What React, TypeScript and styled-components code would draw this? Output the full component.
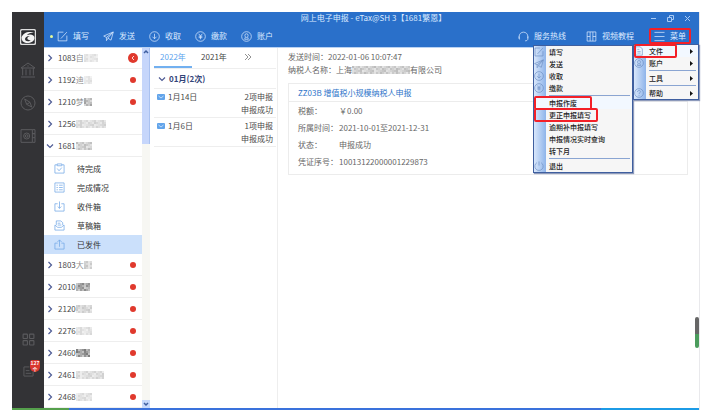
import React from "react";
import styled, { createGlobalStyle, css } from "styled-components";

const GlobalStyle = createGlobalStyle`
  *, *::before, *::after { box-sizing: border-box; }
  body {
    margin: 0;
    background: #ffffff;
    color: #4a4a4a;
    font-family: "Noto Sans CJK SC", "Noto Sans", sans-serif;
    font-size: 8px;
    line-height: 12px;
  }
  button {
    margin: 0;
    padding: 0;
    border: 0;
    background: none;
    color: inherit;
    font: inherit;
    text-align: left;
    white-space: nowrap;
    cursor: pointer;
  }
  h1, h2, p, dl, dd, ul { margin: 0; padding: 0; font: inherit; }
  ul { list-style: none; }
  svg { display: block; flex: none; }
`;

/* ---------- icons ---------- */

type IconName =
  | "edit" | "send" | "receive" | "pay" | "user" | "phone" | "film" | "menu"
  | "bank" | "compass" | "safe" | "apps" | "news"
  | "todo" | "list" | "inbox" | "draft" | "sent"
  | "file" | "help" | "power";

const shapes: Record<IconName, React.ReactNode> = {
  edit: <path d="M14 2.500H2.500v19h19V10M8.500 16.500L21.500 2.500" />,
  send: <path d="M1.500 11L22.500 2l-5 18-7-4.500L22 2.500M1.500 11l6 3L22 2.500M7.500 14v7l3.500-5" />,
  receive: (
    <>
      <circle cx="12" cy="12" r="10.500" />
      <path d="M12 6v11M7.500 12.500L12 17l4.500-4.500" />
    </>
  ),
  pay: (
    <>
      <circle cx="12" cy="12" r="10.500" />
      <path d="M8 6l4 5 4-5M12 11v7M8 11.500h8M8 14.500h8" />
    </>
  ),
  user: (
    <>
      <circle cx="12" cy="12" r="10.500" />
      <path d="M8.500 9.500a3.500 3.500 0 017 0c0 2.500-1.500 4.500-3.500 4.500s-3.500-2-3.500-4.500zM9.500 13.500L8 18h8l-1.500-4.500" />
    </>
  ),
  phone: <path d="M2.500 16V12a9.500 9.500 0 0119 0v4M2.500 11.500v6h2M21.500 11.500v6c0 2.500-2.500 4-6 4" />,
  film: <path d="M2.500 2h19v20h-19zM9 2v20M15 2v20M2.500 12H9M15 12h6.500" />,
  menu: <path d="M1 3h22M1 12h22M1 21h22" />,
  bank: <path d="M1.500 9L12 1.500 22.500 9zM4 9v11M9 11v9M15 11v9M20 9v11M1.500 22.500h21M12 5v2" />,
  compass: (
    <>
      <circle cx="12" cy="12" r="10.500" />
      <path d="M7 6l8 5 2.500 7-7.500-4zM10 14l5-3" />
    </>
  ),
  safe: (
    <>
      <path d="M1.500 2.500h17v19h-17zM18.500 2.500h4v6h-4M18.500 8.500h4v6h-4M22.500 14.500v7h-4" />
      <circle cx="10" cy="12" r="4.500" />
      <circle cx="10" cy="12" r="2" />
    </>
  ),
  apps: (
    <>
      <rect x="2" y="2" width="8" height="8" rx="1" />
      <rect x="14" y="2" width="8" height="8" rx="1" />
      <rect x="2" y="14" width="8" height="8" rx="1" />
      <rect x="14" y="14" width="8" height="8" rx="1" />
    </>
  ),
  news: <path d="M14 2H2v20h20V12M6 10h8M6 16h12" />,
  todo: <path d="M7 4H2v18h20V4h-5M7 2h10v4H7zM7 12l4 5 6-7" />,
  list: <path d="M2 2h20v20H2zM5.500 7h3M11 7h8M5.500 12h3M11 12h8M5.500 17h3M11 17h8" />,
  inbox: <path d="M8 6H2v16h20V6h-6M12 1v15M8 12l4 4 4-4" />,
  draft: <path d="M5 11V2h10l4 4v5M2 11v11h20V11l-6 5H8zM8 7h6M8 11h8" />,
  sent: <path d="M8 9H2v13h20V9h-6M12 17V2M7.500 6.500L12 2l4.500 4.500" />,
  file: <path d="M4 2h11l5 5v15H4zM8 8h5M8 13h8M8 17h8" />,
  help: (
    <>
      <circle cx="12" cy="12" r="10.500" />
      <path d="M8.500 9.500c0-5 7-4.500 7-.5 0 2.500-3.500 2.500-3.500 5.500M12 17v2" />
    </>
  ),
  power: <path d="M12 1v10M7 4a10 10 0 1010 0" />,
};

function Icon({ name, size = 11, weight = 1.6 }: { name: IconName; size?: number; weight?: number }) {
  return (
    <svg width={size} height={size} viewBox="0 0 24 24" fill="none" stroke="currentColor" strokeWidth={weight} aria-hidden="true">
      {shapes[name]}
    </svg>
  );
}

function Chevron({ open = false }: { open?: boolean }) {
  return (
    <svg width="8" height="8" viewBox="0 0 8 8" fill="none" stroke="#4d5a94" strokeWidth="1.200" aria-hidden="true">
      <path d={open ? "M1 2.500L4 5.500 7 2.500" : "M2.500 1L5.500 4 2.500 7"} />
    </svg>
  );
}

function Logo() {
  return (
    <svg width="16" height="16" viewBox="0 0 32 32" aria-hidden="true">
      <rect width="32" height="32" rx="3" fill="#dedede" />
      <rect x="2.500" y="2.500" width="27" height="27" rx="2" fill="#2b2c30" />
      <path d="M3 17C6 8 15 4 28 7c-7 0-12 2-14 5 8-3 15 0 15 6 0 7-9 11-17 10C6 27 3 23 3 17z" fill="#f4f4f4" />
      <path d="M10 20c0-4 5-7 10-6-4 1-6 3-5 6 1 2 4 3 7 2-4 4-12 3-12-2z" fill="#2b2c30" />
    </svg>
  );
}

/* Pixelated patch that hides part of a name. */
function Mosaic({ cells, seed, tone = 0.35 }: { cells: number; seed: number; tone?: number }) {
  const blocks = [];
  for (let column = 0; column < cells; column += 1) {
    for (let row = 0; row < 4; row += 1) {
      const value = ((column * 37 + row * 61 + seed * 17 + column * row * 13) % 29) / 29;
      blocks.push(
        <rect key={`${column}-${row}`} x={column * 2} y={row * 2} width="2" height="2" fill="#555555" opacity={value * tone * 0.5 + tone * 0.3} />,
      );
    }
  }
  return <svg width={cells * 2} height="8" aria-hidden="true">{blocks}</svg>;
}

/* ---------- frame ---------- */

const Page = styled.div`
  display: flex;
  min-height: 100vh;
  padding: 12px 19px 8px 12px;
`;

const Window = styled.div`
  display: grid;
  flex: 1;
  grid-template: 1fr 2px / 32px minmax(0, 1fr);
  border-right: 1px solid #e9e9ec;
`;

const Rail = styled.nav`
  display: flex;
  flex-direction: column;
  justify-content: space-between;
  padding: 17px 0 29px;
  background: #333336;
  color: #5b5b5e;
`;

const RailGroup = styled.div<{ $gap: number }>`
  display: flex;
  flex-direction: column;
  align-items: center;
  gap: ${(p) => p.$gap}px;
`;

const RailButton = styled.button`
  position: relative;
  display: grid;
  place-items: center;
  width: 16px;
  height: 16px;
`;

const RailBadge = styled.span`
  position: absolute;
  top: -3px;
  left: 10px;
  width: 10px;
  height: 12px;
  border-radius: 2px 2px 5px 5px;
  background: #d9372f;
  color: #ffffff;
  font-size: 5px;
  font-weight: 700;
  line-height: 6px;
  text-align: center;
`;

const Main = styled.div`
  display: flex;
  flex-direction: column;
  min-width: 0;
`;

const Header = styled.header`
  position: relative;
  z-index: 2;
  height: 35px;
  background: #2a70ca;
  color: #dceaff;
`;

const TitleRow = styled.div`
  display: grid;
  grid-template-columns: 1fr auto 1fr;
  align-items: center;
  height: 12px;
  padding: 0 8px 0 12px;
`;

const Title = styled.h1`
  white-space: nowrap;
`;

const WindowControls = styled.div`
  display: flex;
  justify-content: flex-end;
  gap: 10px;
`;

const Toolbar = styled.div`
  display: flex;
  align-items: center;
  height: 24px;
  padding: 0 13px 0 6px;
`;

const ToolGroup = styled.div<{ $gap: number }>`
  display: flex;
  align-items: center;
  gap: ${(p) => p.$gap}px;
  & + & { margin-left: auto; }
`;

const ToolButton = styled.button<{ $marked?: boolean }>`
  position: relative;
  display: flex;
  align-items: center;
  gap: 5px;
  ${(p) => p.$marked && css`
    &::after {
      content: "";
      position: absolute;
      inset: -2px -5px;
      border: 2px solid #f32028;
      border-radius: 2px;
    }
  `}
`;

const ActiveDot = styled.span`
  width: 3px;
  height: 3px;
  margin-right: 4px;
  border-radius: 50%;
  background: #e5f99a;
`;

/* ---------- menus ---------- */

const MenuPanel = styled.div<{ $wide?: boolean }>`
  position: absolute;
  z-index: ${(p) => (p.$wide ? 3 : 4)};
  top: ${(p) => (p.$wide ? 33 : 32)}px;
  right: ${(p) => (p.$wide ? 66 : 0)}px;
  width: ${(p) => (p.$wide ? 100 : 66)}px;
  border: 1px solid #3f5f9f;
  background: linear-gradient(90deg, #d9e7fb 0, #8eb4ea 12px, #f6f6f6 12px);
  box-shadow: 1px 1px 1px #8d9abb;
  color: #222222;
  font-size: 7px;
`;

const MenuItem = styled.button<{ $hot?: boolean }>`
  position: relative;
  display: grid;
  grid-template-columns: 12px 1fr auto;
  align-items: center;
  width: 100%;
  height: 12px;
  padding-right: 5px;
  background: ${(p) => (p.$hot ? "#f2f8ff" : "transparent")};
  font-weight: 500;
  & > svg { color: #6e8fc2; }
`;

const MenuText = styled.span`
  padding-left: 3px;
`;

const Marker = styled.span<{ $right: number }>`
  position: absolute;
  inset: -1px ${(p) => p.$right}px -1px 0;
  z-index: 1;
  border: 2px solid #f32028;
  border-radius: 2px;
`;

const MenuRule = styled.hr`
  height: 1px;
  margin: 1px 2px 1px 15px;
  border: 0;
  background: #8aa5d2;
`;

function SubmenuArrow() {
  return (
    <svg width="3" height="5" viewBox="0 0 3 5" aria-hidden="true">
      <path d="M0 0l3 2.500L0 5z" fill="#111111" />
    </svg>
  );
}

interface MenuEntry {
  label: string;
  icon?: IconName;
  mark?: number;
  hot?: boolean;
  rule?: boolean;
}

const mainMenu: MenuEntry[] = [
  { label: "文件", icon: "file", mark: 21, hot: true },
  { label: "账户", icon: "user" },
  { label: "工具", rule: true },
  { label: "帮助", icon: "help", rule: true },
];

const fileMenu: MenuEntry[] = [
  { label: "填写", icon: "edit" },
  { label: "发送", icon: "send" },
  { label: "收取", icon: "receive" },
  { label: "缴款", icon: "pay" },
  { label: "申报作废", rule: true, mark: 40, hot: true },
  { label: "更正申报填写", mark: 34 },
  { label: "逾期补申报填写" },
  { label: "申报情况实时查询" },
  { label: "转下月" },
  { label: "退出", icon: "power", rule: true },
];

function Menu({ entries, wide = false }: { entries: MenuEntry[]; wide?: boolean }) {
  return (
    <MenuPanel $wide={wide} role="menu">
      {entries.map((entry) => (
        <React.Fragment key={entry.label}>
          {entry.rule && <MenuRule />}
          <MenuItem role="menuitem" $hot={entry.hot}>
            {entry.icon ? <Icon name={entry.icon} size={10} /> : <span />}
            <MenuText>{entry.label}</MenuText>
            {!wide && <SubmenuArrow />}
            {entry.mark !== undefined && <Marker $right={entry.mark} />}
          </MenuItem>
        </React.Fragment>
      ))}
    </MenuPanel>
  );
}

/* ---------- body ---------- */

const Body = styled.div`
  display: grid;
  flex: 1;
  grid-template-columns: 98px 8px 128px minmax(0, 1fr);
  border-top: 1px solid #b9d2f3;
`;

const Tree = styled.ul`
  margin-top: -1px;
`;

const TreeRow = styled.button`
  display: grid;
  grid-template-columns: 8px auto 1fr;
  align-items: center;
  width: 100%;
  height: 22px;
  padding: 0 4px 0 2px;
  border-bottom: 1px solid #eeeeee;
`;

const TreeLabel = styled.span`
  display: flex;
  align-items: center;
  padding-left: 4px;
`;

const Partial = styled.span`
  opacity: 0.6;
`;

const Alert = styled.span<{ $large?: boolean }>`
  display: grid;
  place-items: center;
  justify-self: end;
  width: ${(p) => (p.$large ? 10 : 6)}px;
  height: ${(p) => (p.$large ? 10 : 6)}px;
  margin-right: ${(p) => (p.$large ? 0 : 2)}px;
  border-radius: 50%;
  background: #e0392d;
`;

const Folders = styled.ul`
  padding-top: 2px;
`;

const Folder = styled.button<{ $selected?: boolean }>`
  display: flex;
  align-items: center;
  gap: 12px;
  width: 100%;
  height: 19px;
  padding-left: 10px;
  background: ${(p) => (p.$selected ? "#cbe0fb" : "transparent")};
  color: #333333;
  & > svg { color: #6fa6e6; }
`;

const ScrollTrack = styled.div`
  display: flex;
  flex-direction: column;
  justify-content: space-between;
  background: #f7f7f3;
`;

const ScrollThumb = styled.div`
  height: 96px;
  border-right: 1px solid #a9c1f0;
  background: #c6d6fb;
`;

const ScrollEnd = styled.div`
  display: grid;
  place-items: center;
  height: 8px;
  background: #c6d9fb;
`;

const Periods = styled.section`
  padding: 0 1px 0 4px;
  border-right: 1px solid #eeeeee;
`;

const Tabs = styled.div`
  display: grid;
  grid-template-columns: 38px 44px 24px;
  height: 21px;
  border-bottom: 1px solid #eeeeee;
`;

const Tab = styled.button<{ $active?: boolean }>`
  display: grid;
  place-items: center;
  border-bottom: 2px solid ${(p) => (p.$active ? "#72b0f0" : "transparent")};
  color: ${(p) => (p.$active ? "#5ba3ee" : "#444444")};
`;

const Month = styled.button`
  display: flex;
  align-items: center;
  gap: 3px;
  width: 100%;
  height: 20px;
  padding-left: 4px;
  border-bottom: 1px solid #eeeeee;
  color: #324478;
  font-weight: 700;
`;

const Day = styled.button`
  display: grid;
  grid-template-columns: 8px 1fr auto;
  gap: 3px;
  width: 100%;
  height: 29px;
  padding: 1px 3px 0;
  border-bottom: 1px solid #eeeeee;
  line-height: 13px;
  & > svg { margin-top: 4px; }
`;

const DayResult = styled.span`
  text-align: right;
`;

const Detail = styled.main`
  display: flex;
  position: relative;
  flex-direction: column;
  padding: 2px 11px 0 10px;
  color: #666666;
`;

const Fact = styled.p`
  display: flex;
  align-items: center;
  height: 13px;
`;

const Card = styled.article`
  margin-top: 7px;
  border: 1px solid #ececec;
`;

const CardTitle = styled.h2`
  padding: 2px 9px 1px;
  border-bottom: 1px solid #ececec;
  line-height: 14px;
`;

const CardLink = styled.a`
  color: #2d74c9;
  text-decoration: none;
`;

const Fields = styled.dl`
  display: grid;
  grid-template-columns: 41px 1fr;
  padding: 0 9px 4px;
  line-height: 17px;
  white-space: nowrap;
`;

const Handle = styled.div`
  position: absolute;
  right: 0;
  bottom: 60px;
  width: 4px;
  height: 31px;
  border-radius: 2px;
  background: linear-gradient(#666666 55%, #4b9c5c 55%);
`;

const Taskbar = styled.footer`
  display: grid;
  grid-column: 1 / -1;
  grid-template-columns: 7fr 65fr 12fr;
  & > :nth-child(1) { background: #55a04c; }
  & > :nth-child(2) { background: #3a72dc; }
  & > :nth-child(3) { background: #1c9be6; }
`;

/* ---------- data ---------- */

interface Company {
  code: string;
  hint?: string;
  cells: number;
  tone?: number;
  alert?: "dot" | "arrow";
  open?: boolean;
}

const companies: Company[] = [
  { code: "1083", hint: "自", cells: 7, tone: 0.25, alert: "arrow" },
  { code: "1192", hint: "迪", cells: 4, tone: 0.25, alert: "dot" },
  { code: "1210", hint: "梦", cells: 4, tone: 0.7, alert: "dot" },
  { code: "1256", cells: 15, tone: 0.35 },
  { code: "1681", cells: 8, tone: 0.5, open: true },
  { code: "1803", hint: "大", cells: 4, tone: 0.45, alert: "dot" },
  { code: "2010", cells: 7, tone: 0.9, alert: "dot" },
  { code: "2120", cells: 8, tone: 0.4, alert: "dot" },
  { code: "2276", cells: 8, tone: 0.3, alert: "dot" },
  { code: "2460", cells: 7, tone: 1, alert: "dot" },
  { code: "2461", cells: 14, tone: 0.35, alert: "dot" },
  { code: "2468", cells: 8, tone: 0.3, alert: "dot" },
];

const folders: { label: string; icon: IconName; selected?: boolean }[] = [
  { label: "待完成", icon: "todo" },
  { label: "完成情况", icon: "list" },
  { label: "收件箱", icon: "inbox" },
  { label: "草稿箱", icon: "draft" },
  { label: "已发件", icon: "sent", selected: true },
];

const tools: { label: string; icon: IconName }[] = [
  { label: "填写", icon: "edit" },
  { label: "发送", icon: "send" },
  { label: "收取", icon: "receive" },
  { label: "缴款", icon: "pay" },
  { label: "账户", icon: "user" },
];

const days = [
  { date: "1月14日", count: "2项申报" },
  { date: "1月6日", count: "1项申报" },
];

const fields = [
  ["税额：", "￥0.00"],
  ["所属时间：", "2021-10-01至2021-12-31"],
  ["状态：", "申报成功"],
  ["凭证序号：", "10013122000001229873"],
];

function ControlIcon({ d }: { d: string }) {
  return (
    <svg width="7" height="7" viewBox="0 0 7 7" fill="none" stroke="#a9caf5" aria-hidden="true">
      <path d={d} />
    </svg>
  );
}

export default function App() {
  return (
    <>
      <GlobalStyle />
      <Page>
        <Window>
          <Rail>
            <RailGroup $gap={17}>
              <RailButton aria-label="eTax"><Logo /></RailButton>
              <RailButton aria-label="税务"><Icon name="bank" size={16} weight={1.5} /></RailButton>
              <RailButton aria-label="导航"><Icon name="compass" size={16} weight={1.5} /></RailButton>
              <RailButton aria-label="档案"><Icon name="safe" size={16} weight={1.5} /></RailButton>
            </RailGroup>
            <RailGroup $gap={16}>
              <RailButton aria-label="应用"><Icon name="apps" size={13} weight={2} /></RailButton>
              <RailButton aria-label="消息">
                <Icon name="news" size={11} weight={2} />
                <RailBadge>127<br />个</RailBadge>
              </RailButton>
            </RailGroup>
          </Rail>

          <Main>
            <Header>
              <TitleRow>
                <span />
                <Title>网上电子申报 - eTax@SH 3【1681繁恩】</Title>
                <WindowControls>
                  <button aria-label="最小化"><ControlIcon d="M1 3.500h5" /></button>
                  <button aria-label="还原"><ControlIcon d="M.5 2.500h4v4h-4zM2.500 2V.5h4v4H5" /></button>
                  <button aria-label="关闭"><ControlIcon d="M1 1l5 5M6 1L1 6" /></button>
                </WindowControls>
              </TitleRow>
              <Toolbar>
                <ActiveDot />
                <ToolGroup $gap={14}>
                  {tools.map((tool) => (
                    <ToolButton key={tool.label}><Icon name={tool.icon} />{tool.label}</ToolButton>
                  ))}
                </ToolGroup>
                <ToolGroup $gap={20}>
                  <ToolButton><Icon name="phone" />服务热线</ToolButton>
                  <ToolButton><Icon name="film" />视频教程</ToolButton>
                  <ToolButton $marked><Icon name="menu" />菜单</ToolButton>
                </ToolGroup>
              </Toolbar>
              <Menu entries={mainMenu} />
              <Menu entries={fileMenu} wide />
            </Header>

            <Body>
              <Tree>
                {companies.map((company, index) => (
                  <li key={company.code}>
                    <TreeRow aria-expanded={Boolean(company.open)}>
                      <Chevron open={company.open} />
                      <TreeLabel>
                        {company.code}
                        {company.hint && <Partial>{company.hint}</Partial>}
                        <Mosaic cells={company.cells} seed={index + 1} tone={company.tone} />
                      </TreeLabel>
                      {company.alert && (
                        <Alert $large={company.alert === "arrow"}>
                          {company.alert === "arrow" && (
                            <svg width="4" height="6" viewBox="0 0 4 6" fill="none" stroke="#ffd9d4" aria-hidden="true">
                              <path d="M3 1L1 3l2 2" />
                            </svg>
                          )}
                        </Alert>
                      )}
                    </TreeRow>
                    {company.open && (
                      <Folders>
                        {folders.map((folder) => (
                          <li key={folder.label}>
                            <Folder $selected={folder.selected}><Icon name={folder.icon} />{folder.label}</Folder>
                          </li>
                        ))}
                      </Folders>
                    )}
                  </li>
                ))}
              </Tree>

              <ScrollTrack>
                <ScrollThumb>
                  <svg width="8" height="8" viewBox="0 0 8 8" fill="none" stroke="#3f5f9f" strokeWidth="1.500" aria-hidden="true">
                    <path d="M2 5l2-2 2 2" />
                  </svg>
                </ScrollThumb>
                <ScrollEnd>
                  <svg width="8" height="8" viewBox="0 0 8 8" fill="none" stroke="#3f5f9f" strokeWidth="1.500" aria-hidden="true">
                    <path d="M2 3l2 2 2-2" />
                  </svg>
                </ScrollEnd>
              </ScrollTrack>

              <Periods>
                <Tabs role="tablist">
                  <Tab role="tab" aria-selected="true" $active>2022年</Tab>
                  <Tab role="tab" aria-selected="false">2021年</Tab>
                  <Tab aria-label="更多年份">
                    <svg width="8" height="8" viewBox="0 0 8 8" fill="none" stroke="#777777" strokeWidth="0.800" aria-hidden="true">
                      <path d="M1 1l3 3-3 3M4 1l3 3-3 3" />
                    </svg>
                  </Tab>
                </Tabs>
                <Month aria-expanded="true"><Chevron open />01月(2次)</Month>
                {days.map((day) => (
                  <Day key={day.date}>
                    <svg width="8" height="6" viewBox="0 0 8 6" aria-hidden="true">
                      <rect width="8" height="6" rx="1" fill="#62a4ea" />
                      <path d="M1.500 2L4 4l2.500-2" fill="none" stroke="#d7e9fd" strokeWidth="0.800" />
                    </svg>
                    <span>{day.date}</span>
                    <DayResult>{day.count}<br />申报成功</DayResult>
                  </Day>
                ))}
              </Periods>

              <Detail>
                <Fact>发送时间：2022-01-06 10:07:47</Fact>
                <Fact>纳税人名称：上海<Mosaic cells={29} seed={5} tone={0.5} />有限公司</Fact>
                <Card>
                  <CardTitle><CardLink href="#declaration">ZZ03B 增值税小规模纳税人申报</CardLink></CardTitle>
                  <Fields>
                    {fields.map(([label, value]) => (
                      <React.Fragment key={label}>
                        <dt>{label}</dt>
                        <dd>{value}</dd>
                      </React.Fragment>
                    ))}
                  </Fields>
                </Card>
                <Handle />
              </Detail>
            </Body>
          </Main>

          <Taskbar><span /><span /><span /></Taskbar>
        </Window>
      </Page>
    </>
  );
}
